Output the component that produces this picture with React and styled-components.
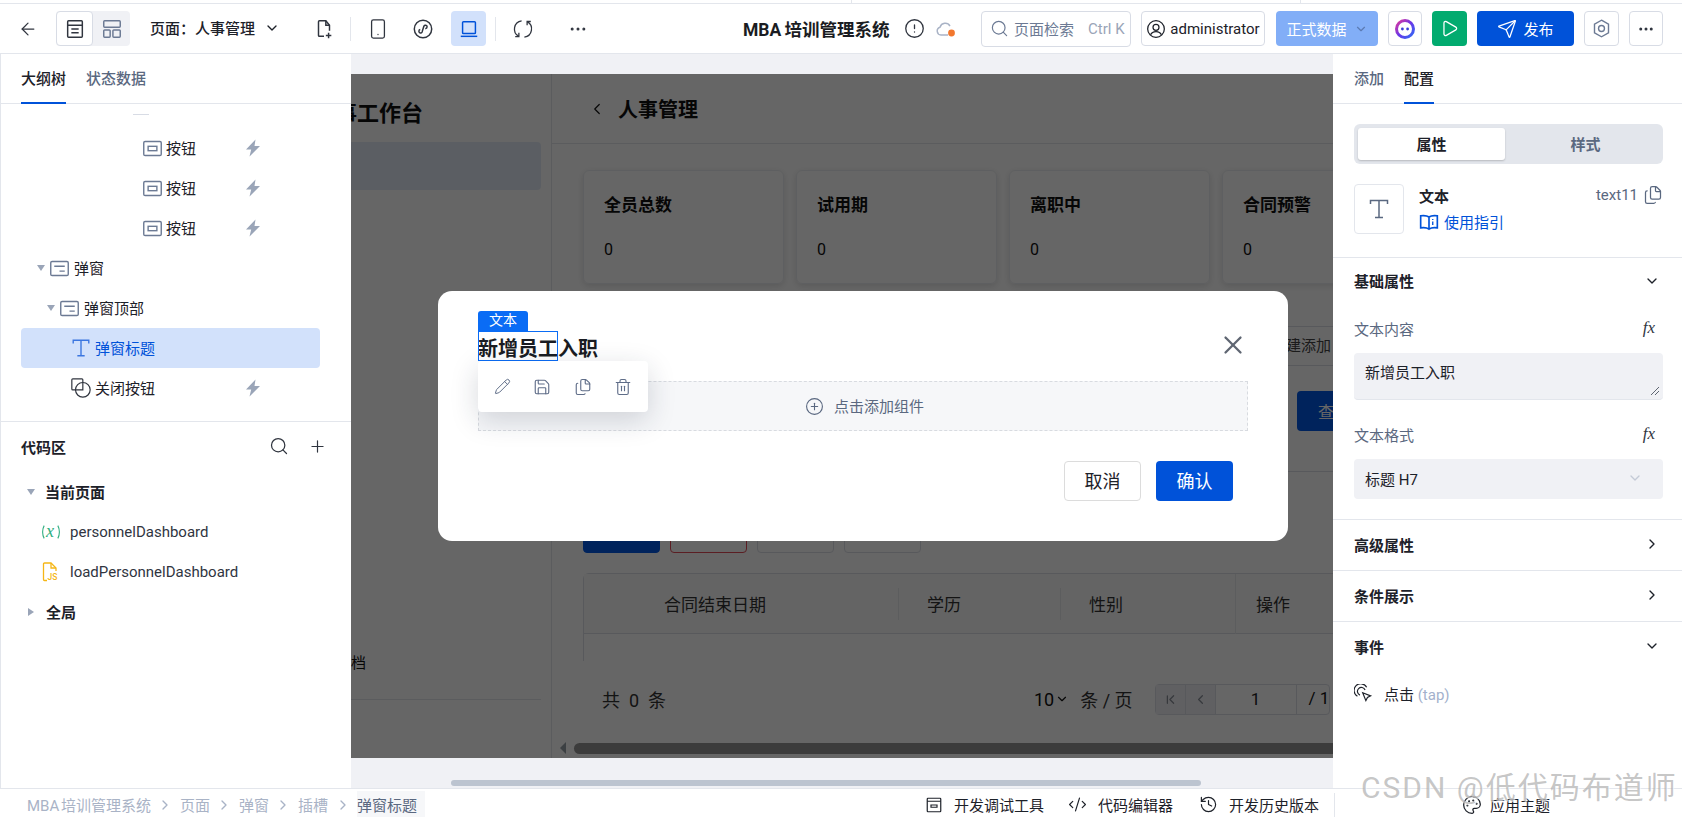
import styled, { createGlobalStyle } from 'styled-components';
import {
  ArrowLeft, ChevronDown, ChevronRight, ChevronLeft, ChevronFirst, Search, Plus, X, Ellipsis, Send, Play,
  Pencil, Save, Files, Trash2, CirclePlus, Palette, History, CodeXml, CircleAlert, Smartphone,
} from 'lucide-react';

const GlobalStyle = createGlobalStyle`
  html, body { margin: 0; padding: 0; background: #fff; overflow: hidden; }
  body, button { font-family: Roboto, "Noto Sans CJK SC", sans-serif; }
  * { box-sizing: border-box; }
`;

const Shell = styled.div`
  width: 1682px;
  height: 817px;
  display: flex;
  flex-direction: column;
  position: relative;
  overflow: hidden;
  color: #1d2129;
  font-size: 15px;
`;

const TopStrip = styled.div`
  height: 4px;
  border-bottom: 1px solid #e3e6ec;
  background:
    linear-gradient(#e3e6ec, #e3e6ec) 851px 0 / 1px 3px no-repeat,
    linear-gradient(#e3e6ec, #e3e6ec) 1300px 0 / 1px 3px no-repeat,
    #fff;
`;

/* ---------- toolbar ---------- */
const Toolbar = styled.header`
  height: 50px;
  flex: none;
  display: flex;
  align-items: center;
  border-bottom: 1px solid #e3e6ec;
`;
const IconBtn = styled.div`
  width: ${(p) => p.$w || 36}px;
  height: 35px;
  margin-left: ${(p) => p.$ml || 0}px;
  flex: none;
  display: flex;
  align-items: center;
  justify-content: center;
  border-radius: 4px;
  color: ${(p) => (p.$active ? '#0052d9' : '#30353f')};
  background: ${(p) => (p.$active ? '#d2e1fb' : 'transparent')};
`;
const Seg = styled.div`
  width: 74px;
  height: 35px;
  flex: none;
  display: flex;
  background: #f0f1f5;
  border-radius: 4px;
`;
const SegItem = styled.div`
  width: 37px;
  display: flex;
  align-items: center;
  justify-content: center;
  border-radius: 4px;
  color: ${(p) => (p.$active ? '#30353f' : '#6c7a94')};
  background: ${(p) => (p.$active ? '#fff' : 'transparent')};
  border: ${(p) => (p.$active ? '1px solid #d8dce5' : 'none')};
`;
const PageSelect = styled.div`
  margin-left: 20px;
  width: 156px;
  padding-bottom: 2px;
  flex: none;
  display: flex;
  align-items: center;
  gap: 9px;
  font-weight: 500;
  white-space: nowrap;
`;
const VLine = styled.i`
  width: 1px;
  height: 24px;
  flex: none;
  margin-left: ${(p) => p.$ml || 0}px;
  background: #e3e6ec;
`;
const AppTitle = styled.div`
  margin-left: 147px;
  width: 146px;
  flex: none;
  font-size: 17.5px;
  word-spacing: -1px;
  font-weight: 700;
  white-space: nowrap;
  color: #1a1c22;
`;
const SearchBox = styled.div`
  margin-left: 23px;
  width: 150px;
  height: 36px;
  flex: none;
  display: flex;
  align-items: center;
  padding-left: 8px;
  gap: 5px;
  border: 1px solid #d8dce5;
  border-radius: 4px;
  color: #6c7a94;
  white-space: nowrap;
`;
const Kbd = styled.span`
  margin-left: 9px;
  color: #9aa5b8;
`;
const UserBox = styled.div`
  margin-left: 10px;
  width: 124px;
  height: 35px;
  flex: none;
  display: flex;
  align-items: center;
  justify-content: center;
  gap: 4px;
  border: 1px solid #d8dce5;
  border-radius: 4px;
`;
const DataBtn = styled.div`
  margin-left: 11px;
  width: 102px;
  height: 35px;
  flex: none;
  display: flex;
  align-items: center;
  justify-content: center;
  gap: 7px;
  border-radius: 4px;
  color: #fff;
  background: #82aef7;
  svg { color: #5b7bb3; }
`;
const BoxBtn = styled.div`
  margin-left: 10px;
  width: ${(p) => p.$w || 35}px;
  height: 35px;
  flex: none;
  display: flex;
  align-items: center;
  justify-content: center;
  gap: 6px;
  border-radius: 4px;
  border: ${(p) => (p.$bg ? 'none' : '1px solid #d8dce5')};
  background: ${(p) => p.$bg || '#fff'};
  color: ${(p) => (p.$bg ? '#fff' : p.$ink || '#6c7a94')};
`;

/* ---------- workspace ---------- */
const Workspace = styled.div`
  flex: 1;
  min-height: 0;
  display: flex;
`;
const Panel = styled.aside`
  width: ${(p) => p.$w}px;
  flex: none;
  display: flex;
  flex-direction: column;
  background: #fff;
  border-left: ${(p) => (p.$edge ? '1px solid #e3e6ec' : 'none')};
`;
const Tabs = styled.div`
  height: 50px;
  flex: none;
  display: flex;
  gap: 20px;
  padding-left: ${(p) => p.$pl}px;
  border-bottom: 1px solid #e3e6ec;
`;
const Tab = styled.div`
  height: 50px;
  padding-top: 13px;
  font-weight: 500;
  color: ${(p) => (p.$active ? '#1d2129' : '#5a6880')};
  border-bottom: ${(p) => (p.$active ? '2px solid #0052d9' : 'none')};
`;
const TreeArea = styled.div`
  height: 318px;
  flex: none;
  padding: 0 31px 0 20px;
  border-bottom: 1px solid #e3e6ec;
`;
const TreeTick = styled.i`
  display: block;
  width: 16px;
  height: 1px;
  margin: 10px 0 13px 112px;
  background: #d8dce5;
`;
const TreeRowWrap = styled.div`
  position: relative;
  display: flex;
  align-items: center;
`;
const TreeRow = styled.div`
  flex: 1;
  height: 40px;
  display: flex;
  align-items: center;
  padding-left: ${(p) => p.$pl}px;
  gap: ${(p) => p.$gap || 3}px;
  border-radius: 4px;
  white-space: nowrap;
  color: ${(p) => (p.$selected ? '#0052d9' : '#1d2129')};
  background: ${(p) => (p.$selected ? '#d2e1fb' : 'transparent')};
`;
const RowText = styled.span`
  padding-bottom: 2px;
`;
const Caret = styled.i`
  width: 0;
  height: 0;
  flex: none;
  ${(p) =>
    p.$open
      ? 'border-left: 4px solid transparent; border-right: 4px solid transparent; border-top: 6px solid #9aa5b8;'
      : 'border-top: 4px solid transparent; border-bottom: 4px solid transparent; border-left: 6px solid #9aa5b8;'}
`;
const Bolt = styled.span`
  position: absolute;
  left: 222px;
  display: flex;
  color: #9aa5b8;
`;
const CodeHead = styled.div`
  height: 50px;
  flex: none;
  display: flex;
  align-items: center;
  padding: 0 24px 2px 20px;
  font-weight: 700;
  color: #1d2129;
`;
const HeadTools = styled.div`
  margin-left: auto;
  display: flex;
  align-items: center;
  gap: 19px;
  color: #30353f;
`;
const CodeRow = styled.div`
  height: 40px;
  display: flex;
  align-items: center;
  padding-left: ${(p) => p.$pl}px;
  gap: ${(p) => p.$gap}px;
  font-weight: ${(p) => (p.$bold ? 700 : 400)};
  color: ${(p) => (p.$bold ? '#1d2129' : '#30353f')};
  white-space: nowrap;
`;
const CodeIconCell = styled.span`
  width: 20px;
  display: flex;
  justify-content: center;
`;

/* ---------- canvas ---------- */
const Canvas = styled.main`
  flex: 1;
  min-width: 0;
  display: flex;
  flex-direction: column;
  background: #f0f1f5;
  padding-top: 20px;
`;
const Stage = styled.div`
  height: 684px;
  flex: none;
  display: flex;
  position: relative;
  overflow: hidden;
  background: #fff;
  color: #222;
`;
const Scrim = styled.div`
  position: absolute;
  inset: 0;
  background: rgba(0, 0, 0, 0.6);
`;
const PageAside = styled.div`
  width: 201px;
  flex: none;
  border-right: 1px solid #e3e6ec;
  display: flex;
  flex-direction: column;
  align-items: flex-end;
  overflow: hidden;
`;
const AsideTitle = styled.div`
  height: 68px;
  padding: 21px 128px 0 0;
  font-size: 22px;
  font-weight: 700;
  white-space: nowrap;
  color: #111;
`;
const AsideActive = styled.div`
  width: 201px;
  height: 48px;
  margin-right: 10px;
  border-radius: 4px;
  background: #e4ecf7;
`;
const AsideItem = styled.div`
  margin: 461px 185px 0 0;
  white-space: nowrap;
  color: #111;
`;
const AsideLine = styled.i`
  width: 191px;
  height: 1px;
  margin: 27px 10px 0 0;
  background: #e3e6ec;
`;
const PageMain = styled.div`
  width: 1000px;
  flex: none;
  display: flex;
  flex-direction: column;
`;
const PageHead = styled.div`
  height: 70px;
  flex: none;
  display: flex;
  align-items: center;
  gap: 12px;
  padding: 0 0 0 36px;
  font-size: 20px;
  font-weight: 700;
  color: #111;
  border-bottom: 1px solid #e3e6ec;
`;
const Cards = styled.div`
  display: flex;
  gap: 12px;
  padding: 26px 0 0 31px;
`;
const Card = styled.div`
  width: 201px;
  height: 114px;
  flex: none;
  padding: 20px;
  border: 1px solid #eceef2;
  border-radius: 6px;
  box-shadow: 0 2px 6px rgba(0, 0, 0, 0.12);
`;
const CardTitle = styled.div`
  font-size: 17px;
  font-weight: 700;
  color: #111;
`;
const CardValue = styled.div`
  margin-top: 24px;
  font-size: 16px;
  color: #111;
`;
const FilterRow = styled.div`
  margin: 42px 0 0 31px;
  height: 40px;
  display: flex;
  align-items: center;
  padding: 0 0 3px 688px;
  color: #444;
  border-top: 1px solid #dcdfe6;
  border-bottom: 1px solid #dcdfe6;
  white-space: nowrap;
`;
const QueryRow = styled.div`
  margin-left: 31px;
  height: 106px;
  padding: 25px 0 0 714px;
  border-bottom: 1px solid #dcdfe6;
`;
const QueryBtn = styled.div`
  width: 76px;
  height: 40px;
  padding: 8px 0 0 21px;
  font-size: 16px;
  border-radius: 4px;
  color: #fff;
  background: #0057e6;
`;
const ActionRow = styled.div`
  display: flex;
  gap: 10px;
  margin: 41px 0 0 31px;
`;
const ActionBtn = styled.div`
  width: 77px;
  height: 40px;
  border-radius: 4px;
  border: 1px solid ${(p) => p.$line};
  background: ${(p) => p.$bg || 'transparent'};
`;
const Table = styled.div`
  margin: 20px 0 0 31px;
  width: 760px;
  border: 1px solid #dcdfe6;
  border-bottom: none;
  border-radius: 6px 0 0 0;
`;
const TableHead = styled.div`
  height: 60px;
  display: grid;
  grid-template-columns: 315px 162px 175px 1fr;
  align-items: center;
  font-size: 17px;
  color: #333;
  background: #fafafa;
  border-bottom: 1px solid #dcdfe6;
`;
const HeadCell = styled.div`
  height: ${(p) => (p.$full ? 60 : 32)}px;
  display: flex;
  align-items: center;
  padding: 0 0 2px ${(p) => p.$pl}px;
  border-right: ${(p) => (p.$nobar ? 'none' : '1px solid #e6e8ec')};
`;
const TableBody = styled.div`
  height: 27px;
  background: #fff;
`;
const PagerRow = styled.div`
  height: 75px;
  display: flex;
  align-items: center;
  padding: 1px 0 0 50px;
  font-size: 18px;
  color: #333;
  white-space: nowrap;
`;
const PageSize = styled.span`
  margin-left: 368px;
  display: flex;
  align-items: center;
  gap: 1px;
  color: #111;
`;
const PageUnit = styled.span`
  margin-left: 11px;
`;
const Pager = styled.div`
  margin-left: 22px;
  height: 31px;
  display: flex;
  font-size: 17px;
  border: 1px solid #dcdfe6;
  border-radius: 4px;
`;
const PagerCell = styled.div`
  width: ${(p) => p.$w}px;
  display: flex;
  align-items: center;
  justify-content: center;
  border-right: 1px solid #dcdfe6;
  color: ${(p) => (p.$bg ? '#8a8f99' : '#222')};
  background: ${(p) => p.$bg || 'transparent'};
`;
const PagerTail = styled.div`
  padding: 3px 0 0 12px;
  color: #111;
`;
const BarRow = styled.div`
  display: flex;
  align-items: center;
  gap: 8px;
  margin-top: 6px;
  padding-left: 8px;
`;
const BarArrow = styled.i`
  width: 0;
  height: 0;
  border-top: 6px solid transparent;
  border-bottom: 6px solid transparent;
  border-right: 6px solid #97a0a8;
`;
const BarThumb = styled.i`
  width: 780px;
  height: 11px;
  border-radius: 6px;
  background: #979797;
`;
const CanvasTrack = styled.i`
  display: block;
  width: 750px;
  height: 6px;
  margin: 22px 0 0 100px;
  border-radius: 3px;
  background: #bcc4d0;
`;

/* ---------- modal ---------- */
const Modal = styled.div`
  position: absolute;
  left: 87px;
  top: 217px;
  width: 850px;
  height: 250px;
  padding: 40px;
  border-radius: 14px;
  background: #fff;
  color: #1d2129;
`;
const ModalHead = styled.div`
  height: 50px;
  display: flex;
  align-items: flex-start;
  justify-content: space-between;
`;
const ModalTitle = styled.div`
  position: relative;
  margin-top: 3px;
  font-size: 20px;
  line-height: 30px;
  font-weight: 700;
  color: #1a1c22;
`;
const Badge = styled.span`
  position: absolute;
  left: 0;
  top: -23px;
  width: 50px;
  height: 20px;
  font-size: 14px;
  line-height: 19px;
  font-weight: 400;
  text-align: center;
  color: #fff;
  background: #0a6cf5;
  border-radius: 3px 3px 0 0;
`;
const Selection = styled.span`
  position: absolute;
  left: 0;
  top: -3px;
  width: 80px;
  height: 30px;
  border: 1px solid #0a6cf5;
`;
const CloseBtn = styled.span`
  display: flex;
  margin-top: -1px;
  color: #5f6672;
`;
const FloatBar = styled.div`
  position: absolute;
  left: 40px;
  top: 70px;
  width: 170px;
  height: 51px;
  display: flex;
  align-items: center;
  justify-content: space-around;
  padding: 0 5px;
  border-radius: 4px;
  color: #5f6d88;
  background: #fff;
  box-shadow: 0 8px 28px rgba(30, 40, 60, 0.18);
  z-index: 2;
`;
const SlotBox = styled.div`
  height: 50px;
  width: 770px;
  display: flex;
  align-items: center;
  justify-content: center;
  gap: 10px;
  padding: 0 0 0 3px;
  color: #5a6880;
  background: #f6f7f9;
  border: 1px dashed #d8dbe0;
`;
const ModalFoot = styled.div`
  margin: 30px 15px 0 0;
  display: flex;
  justify-content: flex-end;
  gap: 15px;
`;
const ModalBtn = styled.div`
  width: 77px;
  height: 40px;
  display: flex;
  align-items: center;
  justify-content: center;
  padding-bottom: 2px;
  font-size: 18px;
  border-radius: 4px;
  color: ${(p) => (p.$primary ? '#fff' : '#1d2129')};
  background: ${(p) => (p.$primary ? '#0052d9' : '#fff')};
  border: ${(p) => (p.$primary ? 'none' : '1px solid #dcdcdc')};
`;

/* ---------- right panel ---------- */
const SideBody = styled.div`
  padding: 20px 19px 23px 21px;
  border-bottom: 1px solid #e3e6ec;
`;
const Switch = styled.div`
  height: 40px;
  display: flex;
  padding: 4px;
  border-radius: 6px;
  background: #e3e6ec;
`;
const SwitchItem = styled.div`
  width: ${(p) => (p.$active ? 147 : 154)}px;
  display: flex;
  align-items: center;
  justify-content: center;
  padding: 0 0 2px ${(p) => (p.$active ? 0 : 7)}px;
  font-weight: 700;
  border-radius: 3px;
  color: ${(p) => (p.$active ? '#1d2129' : '#5a6880')};
  background: ${(p) => (p.$active ? '#fff' : 'transparent')};
  box-shadow: ${(p) => (p.$active ? '0 1px 2px rgba(0,0,0,.2)' : 'none')};
`;
const CompRow = styled.div`
  margin-top: 20px;
  height: 50px;
  display: flex;
`;
const CompIcon = styled.div`
  width: 50px;
  height: 50px;
  flex: none;
  display: flex;
  align-items: center;
  justify-content: center;
  color: #5a6880;
  border: 1px solid #e3e6ec;
  border-radius: 4px;
`;
const CompInfo = styled.div`
  margin-left: 15px;
  flex: 1;
`;
const CompTop = styled.div`
  display: flex;
  align-items: center;
  height: 22px;
  font-weight: 700;
`;
const CompId = styled.span`
  margin-left: auto;
  margin-right: 5px;
  font-weight: 400;
  color: #5a6880;
`;
const GuideLink = styled.div`
  margin-top: 5px;
  display: flex;
  align-items: center;
  gap: 5px;
  color: #0052d9;
`;
const SectionHead = styled.div`
  height: ${(p) => p.$h}px;
  display: flex;
  align-items: center;
  justify-content: space-between;
  padding: 0 22px 2px 21px;
  font-weight: 700;
  color: #1d2129;
  border-bottom: ${(p) => (p.$line ? '1px solid #e3e6ec' : 'none')};
`;
const FieldLabel = styled.div`
  height: 48px;
  margin-top: ${(p) => p.$mt || 0}px;
  display: flex;
  align-items: center;
  justify-content: space-between;
  padding: 0 27px 2px 21px;
  color: #5a6880;
`;
const Fx = styled.span`
  font-family: "Liberation Serif", serif;
  font-style: italic;
  font-size: 17px;
  color: #30353f;
`;
const TextArea = styled.div`
  position: relative;
  margin: 0 19px 0 21px;
  height: 47px;
  padding: 8px 11px;
  border-radius: 4px;
  background: #f0f1f5;
  border-bottom: 1px solid #e3e6ec;
`;
const Grip = styled.svg`
  position: absolute;
  right: 3px;
  bottom: 3px;
`;
const SelectBox = styled.div`
  margin: 0 19px 20px 21px;
  height: 40px;
  display: flex;
  align-items: center;
  justify-content: space-between;
  padding: 0 20px 2px 11px;
  border-radius: 4px;
  background: #f0f1f5;
  svg { color: #c4cad6; }
`;
const BasicSection = styled.div`
  border-bottom: 1px solid #e3e6ec;
`;
const EventRow = styled.div`
  margin-top: 11px;
  display: flex;
  align-items: center;
  gap: 11px;
  padding-left: 21px;
`;
const Muted = styled.span`
  color: #a3b1cc;
`;

/* ---------- status bar ---------- */
const StatusBar = styled.footer`
  height: 29px;
  flex: none;
  display: flex;
  align-items: center;
  padding: 3px 0 0 27px;
  border-top: 1px solid #e3e6ec;
  white-space: nowrap;
`;
const Crumb = styled.span`
  color: ${(p) => (p.$current ? '#5a6880' : '#a9b3c6')};
  background: ${(p) => (p.$current ? '#f6f7f9' : 'transparent')};
  padding: ${(p) => (p.$current ? '3px 8px 3px 0' : '0')};
  word-spacing: -2px;
`;
const CrumbSep = styled.span`
  display: flex;
  width: 29px;
  justify-content: center;
  color: #a9b3c6;
`;
const StatusTool = styled.span`
  display: flex;
  align-items: center;
  gap: ${(p) => p.$gap || 11}px;
  margin-left: ${(p) => p.$ml}px;
`;
const StatusDivider = styled.i`
  width: 1px;
  height: 24px;
  margin-left: 15px;
  background: #e3e6ec;
`;
const Watermark = styled.div`
  position: absolute;
  left: 1361px;
  top: 768px;
  font-size: 30px;
  line-height: 40px;
  letter-spacing: 2px;
  white-space: nowrap;
  color: rgba(150, 150, 150, 0.55);
  text-shadow: 1px 1px 1px rgba(255, 255, 255, 0.7);
  pointer-events: none;
`;

/* ---------- drawn icons ---------- */
const Svg = ({ size = 18, children, ...rest }) => (
  <svg width={size} height={size} viewBox="0 0 24 24" fill="none" stroke="currentColor" strokeWidth="1.6" {...rest}>
    {children}
  </svg>
);
const PageIcon = () => (
  <Svg size={22}>
    <rect x="4" y="3" width="16" height="18" rx="1" />
    <path d="M4 8h16M8 12h8M8 16h8" />
  </Svg>
);
const LayoutIcon = () => (
  <Svg size={22}>
    <rect x="3" y="3" width="18" height="7" rx="1" />
    <rect x="3" y="13" width="7" height="8" rx="1" />
    <rect x="13" y="13" width="8" height="8" rx="1" />
  </Svg>
);
const FileAddIcon = () => (
  <Svg size={22}>
    <path d="M12 20H7a1 1 0 0 1-1-1V4a1 1 0 0 1 1-1h7l4 5v6" />
    <path d="M14 3v5h4M17 16v6M14 19h6" />
  </Svg>
);
const MiniAppIcon = () => (
  <Svg size={22}>
    <circle cx="12" cy="12" r="9.5" />
    <path d="M7.5 14.5c0 2 2.5 2.5 3.5.8l2-6.5c.8-1.6 3.5-1.2 3.5.8 0 1.2-1 2-2 2.2M7.5 14.5c0-1 .6-1.8 1.5-2" />
  </Svg>
);
const LaptopIcon = () => (
  <Svg size={22}>
    <rect x="5" y="4" width="14" height="13" rx="1" />
    <path d="M3 20h18" />
  </Svg>
);
const SyncIcon = () => (
  <Svg size={22} strokeWidth="1.4">
    <path d="M10.500 3.100A9 9 0 0 0 7.500 20M13.500 20.900A9 9 0 0 0 16.500 4" />
    <path d="M7.500 16v4.200H3.500M16.500 8V3.800h4" />
  </Svg>
);
const CloudDot = () => (
  <svg width="24" height="22" viewBox="0 0 24 22" fill="none" stroke="#a9b3c6" strokeWidth="1.5">
    <path d="M14 17H7a4 4 0 0 1-1-7.8A5.5 5.5 0 0 1 16 8" />
    <circle cx="17.5" cy="15" r="3.4" fill="#f2772e" stroke="none" />
  </svg>
);
const UserIcon = () => (
  <Svg size={20} strokeWidth="1.5">
    <circle cx="12" cy="12" r="10" />
    <circle cx="12" cy="10" r="3.6" />
    <path d="M5.5 19c1.2-3 3.6-4 6.5-4s5.3 1 6.5 4" />
  </Svg>
);
const AiIcon = () => (
  <svg width="22" height="22" viewBox="0 0 22 22" fill="none">
    <defs>
      <linearGradient id="aiRing" x1="0" y1="0" x2="1" y2="1">
        <stop offset="0" stopColor="#e0389c" />
        <stop offset="0.5" stopColor="#6a37e8" />
        <stop offset="1" stopColor="#2f6cf5" />
      </linearGradient>
    </defs>
    <circle cx="11" cy="11" r="8.5" stroke="url(#aiRing)" strokeWidth="3" />
    <circle cx="8.4" cy="11" r="1.4" fill="#3a3fd8" />
    <circle cx="13.6" cy="11" r="1.4" fill="#3a3fd8" />
  </svg>
);
const HexIcon = () => (
  <Svg size={21}>
    <path d="M12 2.5l8 4.6v9.8l-8 4.6-8-4.6V7.100z" />
    <circle cx="12" cy="12" r="3.4" />
  </Svg>
);
const BoltGlyph = () => (
  <svg width="20" height="20" viewBox="0 0 20 20" fill="currentColor">
    <path d="M12.500 1.500L3 11.500h5.200L6.500 18.500l10.500-10.500h-5.500z" />
  </svg>
);
const ButtonNode = () => (
  <Svg size={21} style={{ color: '#6c7a94' }}>
    <rect x="2" y="4" width="20" height="16" rx="1.500" />
    <rect x="7" y="9.500" width="10" height="5" />
  </Svg>
);
const ModalNode = () => (
  <Svg size={21} style={{ color: '#6c7a94' }}>
    <rect x="2" y="4" width="20" height="16" rx="1.500" />
    <path d="M6 9.500h12M12 15h6" />
  </Svg>
);
const TextGlyph = ({ size = 22, color }) => (
  <Svg size={size} strokeWidth="1.500" style={{ color }}>
    <path d="M3.500 7V3.500h17V7M12 3.500V20.500M8 20.500h8" />
  </Svg>
);
const CloseNode = () => (
  <Svg size={22} strokeWidth="1.300" style={{ color: '#30353f' }}>
    <path d="M14 6V3a1 1 0 0 0-1-1H3a1 1 0 0 0-1 1v10a1 1 0 0 0 1 1h3" />
    <circle cx="14" cy="14" r="8" />
    <path d="M6 14h8V6" />
  </Svg>
);
const VarIcon = () => (
  <svg width="22" height="18" viewBox="0 0 22 18" fill="none" stroke="#2fae80" strokeWidth="1.200">
    <path d="M3.500 2C1.200 6 1.200 12 3.500 16M18.500 2c2.300 4 2.300 10 0 14" />
    <text x="5.500" y="14" fontFamily="Liberation Serif, serif" fontStyle="italic" fontSize="20" fill="#2fae80" stroke="none">x</text>
  </svg>
);
const JsIcon = () => (
  <svg width="18" height="20" viewBox="0 0 18 20" fill="none" stroke="#f5b616" strokeWidth="1.300">
    <path d="M5 18.500H2.500a1 1 0 0 1-1-1V2a1 1 0 0 1 1-1H9l5 5v3" />
    <path d="M9 1v5h5" />
    <text x="5.500" y="18" fontFamily="Roboto, sans-serif" fontSize="8.500" fontWeight="500" fill="#f5b616" stroke="none">JS</text>
  </svg>
);
const GuideIcon = () => (
  <Svg size={20} style={{ color: '#0052d9' }}>
    <path d="M12 6C10 4.500 6 4 2 4.500V19c4-.5 8 0 10 1.500 2-1.500 6-2 10-1.500V4.500C18 4 14 4.500 12 6zM12 6v14.500" strokeWidth="2" />
    <path d="M16.500 8.500v1M16.500 11.500v4" />
  </Svg>
);
const TapIcon = () => (
  <Svg size={19} strokeWidth="1.500" style={{ color: '#1d2129' }}>
    <path d="M11 11l10 4-4 2-2 4z" />
    <path d="M7.500 14A5 5 0 1 1 14 7.500M4.300 15.500A8.500 8.500 0 1 1 16 4" />
  </Svg>
);
const DevIcon = () => (
  <Svg size={18}>
    <rect x="3" y="3" width="18" height="18" rx="1" />
    <path d="M3 7h18M8 12h8v3H8z" />
  </Svg>
);

const kpis = ['全员总数', '试用期', '离职中', '合同预警'];

const TreeNode = ({ pl, gap, selected, bolt, icon, label }) => (
  <TreeRowWrap>
    <TreeRow $pl={pl} $gap={gap} $selected={selected}>
      {icon}
      <RowText>{label}</RowText>
    </TreeRow>
    {bolt && (
      <Bolt>
        <BoltGlyph />
      </Bolt>
    )}
  </TreeRowWrap>
);

export default function App() {
  return (
    <Shell>
      <GlobalStyle />
      <TopStrip />
      <Toolbar>
        <IconBtn $w={56}><ArrowLeft size={20} strokeWidth={1.5} /></IconBtn>
        <Seg>
          <SegItem $active><PageIcon /></SegItem>
          <SegItem><LayoutIcon /></SegItem>
        </Seg>
        <PageSelect>
          页面：人事管理
          <ChevronDown size={16} />
        </PageSelect>
        <IconBtn><FileAddIcon /></IconBtn>
        <VLine $ml={8} />
        <IconBtn $ml={9}><Smartphone size={22} strokeWidth={1.4} /></IconBtn>
        <IconBtn $ml={9}><MiniAppIcon /></IconBtn>
        <IconBtn $w={35} $ml={10} $active><LaptopIcon /></IconBtn>
        <VLine $ml={9} />
        <IconBtn $ml={9}><SyncIcon /></IconBtn>
        <IconBtn $ml={19}><Ellipsis size={20} strokeWidth={1.6} /></IconBtn>
        <AppTitle>MBA 培训管理系统</AppTitle>
        <IconBtn $w={24} $ml={13}><CircleAlert size={21} strokeWidth={1.5} /></IconBtn>
        <IconBtn $w={24} $ml={8}><CloudDot /></IconBtn>
        <SearchBox>
          <Search size={19} strokeWidth={1.5} />
          页面检索
          <Kbd>Ctrl K</Kbd>
        </SearchBox>
        <UserBox>
          <UserIcon />
          administrator
        </UserBox>
        <DataBtn>
          正式数据
          <ChevronDown size={14} />
        </DataBtn>
        <BoxBtn $w={34}><AiIcon /></BoxBtn>
        <BoxBtn $bg="#02ab6f"><Play size={19} strokeWidth={1.6} /></BoxBtn>
        <BoxBtn $w={97} $bg="#0052d9">
          <Send size={20} strokeWidth={1.5} />
          发布
        </BoxBtn>
        <BoxBtn><HexIcon /></BoxBtn>
        <BoxBtn $w={34} $ink="#30353f"><Ellipsis size={18} /></BoxBtn>
      </Toolbar>

      <Workspace>
        <Panel $w={351} $edge>
          <Tabs $pl={20}>
            <Tab $active>大纲树</Tab>
            <Tab>状态数据</Tab>
          </Tabs>
          <TreeArea>
            <TreeTick />
            <TreeNode pl={121} bolt icon={<ButtonNode />} label="按钮" />
            <TreeNode pl={121} bolt icon={<ButtonNode />} label="按钮" />
            <TreeNode pl={121} bolt icon={<ButtonNode />} label="按钮" />
            <TreeNode
              pl={16}
              gap={4}
              icon={<><Caret $open /><ModalNode /></>}
              label="弹窗"
            />
            <TreeNode
              pl={26}
              gap={4}
              icon={<><Caret $open /><ModalNode /></>}
              label="弹窗顶部"
            />
            <TreeNode pl={49} selected icon={<TextGlyph color="#3b76e0" />} label="弹窗标题" />
            <TreeNode pl={49} bolt icon={<CloseNode />} label="关闭按钮" />
          </TreeArea>
          <CodeHead>
            代码区
            <HeadTools>
              <Search size={20} strokeWidth={1.5} />
              <Plus size={19} strokeWidth={1.5} />
            </HeadTools>
          </CodeHead>
          <CodeRow $pl={26} $gap={10} $bold><Caret $open /><RowText>当前页面</RowText></CodeRow>
          <CodeRow $pl={40} $gap={9}><CodeIconCell><VarIcon /></CodeIconCell>personnelDashboard</CodeRow>
          <CodeRow $pl={40} $gap={9}><CodeIconCell><JsIcon /></CodeIconCell>loadPersonnelDashboard</CodeRow>
          <CodeRow $pl={27} $gap={12} $bold><Caret /><RowText>全局</RowText></CodeRow>
        </Panel>

        <Canvas>
          <Stage>
            <PageAside>
              <AsideTitle>人事工作台</AsideTitle>
              <AsideActive />
              <AsideItem>档</AsideItem>
              <AsideLine />
            </PageAside>
            <PageMain>
              <PageHead>
                <ChevronLeft size={18} strokeWidth={1.6} />
                人事管理
              </PageHead>
              <Cards>
                {kpis.map((name) => (
                  <Card key={name}>
                    <CardTitle>{name}</CardTitle>
                    <CardValue>0</CardValue>
                  </Card>
                ))}
              </Cards>
              <FilterRow>创建添加</FilterRow>
              <QueryRow>
                <QueryBtn>查询</QueryBtn>
              </QueryRow>
              <ActionRow>
                <ActionBtn $line="#0057e6" $bg="#0057e6" />
                <ActionBtn $line="#e34d59" />
                <ActionBtn $line="#dcdfe6" />
                <ActionBtn $line="#dcdfe6" />
              </ActionRow>
              <Table>
                <TableHead>
                  <HeadCell $pl={80}>合同结束日期</HeadCell>
                  <HeadCell $pl={28}>学历</HeadCell>
                  <HeadCell $pl={28} $full>性别</HeadCell>
                  <HeadCell $pl={20} $nobar>操作</HeadCell>
                </TableHead>
                <TableBody />
              </Table>
              <PagerRow>
                共&nbsp;&nbsp;0&nbsp;&nbsp;条
                <PageSize>10<ChevronDown size={14} /></PageSize>
                <PageUnit>条 / 页</PageUnit>
                <Pager>
                  <PagerCell $w={30} $bg="#f0f1f5"><ChevronFirst size={15} /></PagerCell>
                  <PagerCell $w={30} $bg="#f0f1f5"><ChevronLeft size={15} /></PagerCell>
                  <PagerCell $w={81}>1</PagerCell>
                  <PagerTail>/ 1</PagerTail>
                </Pager>
              </PagerRow>
              <BarRow>
                <BarArrow />
                <BarThumb />
              </BarRow>
            </PageMain>
            <Scrim />
            <Modal>
              <ModalHead>
                <ModalTitle>
                  <Badge>文本</Badge>
                  <Selection />
                  新增员工入职
                </ModalTitle>
                <CloseBtn><X size={30} strokeWidth={1.8} /></CloseBtn>
              </ModalHead>
              <FloatBar>
                <Pencil size={17} strokeWidth={1.4} />
                <Save size={18} strokeWidth={1.5} />
                <Files size={18} strokeWidth={1.5} />
                <Trash2 size={18} strokeWidth={1.5} />
              </FloatBar>
              <SlotBox>
                <CirclePlus size={19} strokeWidth={1.4} />
                <RowText>点击添加组件</RowText>
              </SlotBox>
              <ModalFoot>
                <ModalBtn>取消</ModalBtn>
                <ModalBtn $primary>确认</ModalBtn>
              </ModalFoot>
            </Modal>
          </Stage>
          <CanvasTrack />
        </Canvas>

        <Panel $w={349}>
          <Tabs $pl={21}>
            <Tab>添加</Tab>
            <Tab $active>配置</Tab>
          </Tabs>
          <SideBody>
            <Switch>
              <SwitchItem $active>属性</SwitchItem>
              <SwitchItem>样式</SwitchItem>
            </Switch>
            <CompRow>
              <CompIcon><TextGlyph size={24} /></CompIcon>
              <CompInfo>
                <CompTop>
                  文本
                  <CompId>text11</CompId>
                  <Files size={20} strokeWidth={1.5} color="#5a6880" />
                </CompTop>
                <GuideLink><GuideIcon />使用指引</GuideLink>
              </CompInfo>
            </CompRow>
          </SideBody>
          <BasicSection>
            <SectionHead $h={47}>基础属性<ChevronDown size={16} /></SectionHead>
            <FieldLabel>文本内容<Fx>fx</Fx></FieldLabel>
            <TextArea>
              新增员工入职
              <Grip width="10" height="10" viewBox="0 0 10 10" stroke="#5f6672" strokeWidth="1">
                <path d="M1 9l8-8M5 9l4-4" />
              </Grip>
            </TextArea>
            <FieldLabel $mt={11}>文本格式<Fx>fx</Fx></FieldLabel>
            <SelectBox>标题 H7<ChevronDown size={16} /></SelectBox>
          </BasicSection>
          <SectionHead $h={51} $line>高级属性<ChevronRight size={16} /></SectionHead>
          <SectionHead $h={51} $line>条件展示<ChevronRight size={16} /></SectionHead>
          <SectionHead $h={50}>事件<ChevronDown size={16} /></SectionHead>
          <EventRow>
            <TapIcon />
            <span>点击 <Muted>(tap)</Muted></span>
          </EventRow>
        </Panel>
      </Workspace>

      <StatusBar>
        <Crumb>MBA 培训管理系统</Crumb>
        <CrumbSep><ChevronRight size={16} /></CrumbSep>
        <Crumb>页面</Crumb>
        <CrumbSep><ChevronRight size={16} /></CrumbSep>
        <Crumb>弹窗</Crumb>
        <CrumbSep><ChevronRight size={16} /></CrumbSep>
        <Crumb>插槽</Crumb>
        <CrumbSep><ChevronRight size={16} /></CrumbSep>
        <Crumb $current>弹窗标题</Crumb>
        <StatusTool $ml={500}><DevIcon />开发调试工具</StatusTool>
        <StatusTool $ml={24}><CodeXml size={19} strokeWidth={1.5} />代码编辑器</StatusTool>
        <StatusTool $ml={26}><History size={19} strokeWidth={1.5} />开发历史版本</StatusTool>
        <StatusDivider />
        <StatusTool $ml={127} $gap={8}><Palette size={20} strokeWidth={1.5} />应用主题</StatusTool>
      </StatusBar>
      <Watermark>CSDN @低代码布道师</Watermark>
    </Shell>
  );
}
